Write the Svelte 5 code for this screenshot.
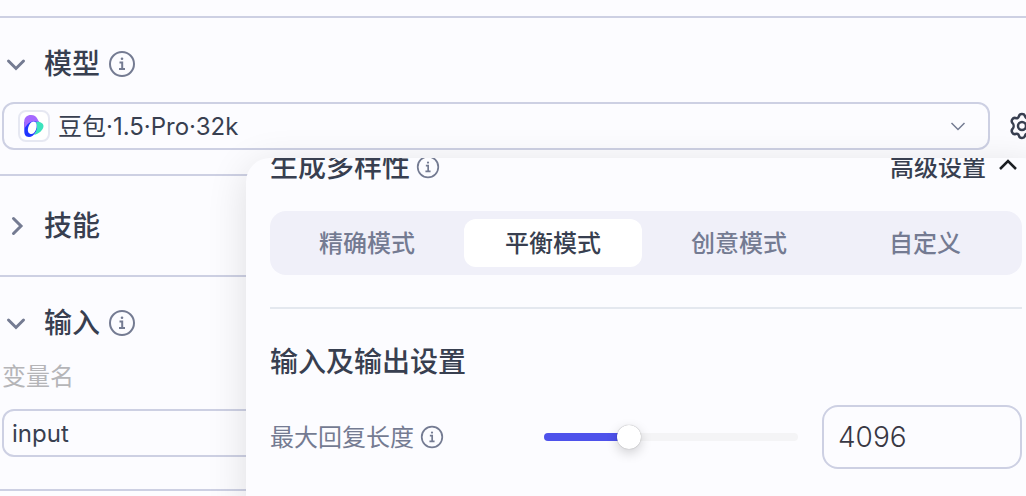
<script>
  let model = $state("豆包·1.5·Pro·32k");
  let variableName = $state("input");
  let mode = $state("平衡模式");
  let maxLength = $state(4096);

  const modes = ["精确模式", "平衡模式", "创意模式", "自定义"];
  const limit = 12288;

  let filled = $derived((maxLength / limit) * 100);
</script>

{#snippet info(size)}
  <svg class="info" width={size} height={size} viewBox="0 0 28 28" aria-hidden="true">
    <circle cx="14" cy="14" r="12" />
    <path d="M11.5 12.5h2.700v6.500M11 19h6" />
    <circle class="dot" cx="14" cy="8.800" r="1.300" />
  </svg>
{/snippet}

<main>
  <section>
    <button class="title">
      <svg class="arrow" width="32" height="32" viewBox="0 0 32 32" aria-hidden="true">
        <path d="M8.500 13l7.500 7.500 7.500-7.500" />
      </svg>
      <span>模型</span>
      {@render info(28)}
    </button>
    <div class="model-row">
      <div class="field model">
        <span class="logo">
          <svg width="20" height="24" viewBox="0 0 20 24" aria-hidden="true">
            <path fill="#1f35ff" d="M9 2l8 8-5 8c-2 3-4.500 5-7 5C1.500 23 .2 20 .3 17V8z" />
            <path fill="#a569ff" d="M.3 15V7.500C.3 3.500 3 1 7 1c3.500 0 5 1.500 6.500 4l2 4C11 6 5 6 .3 15z" />
            <path fill="#3be3bd" d="M12 8c3.500-.7 7.500 1 7.500 4 0 4-5 8-9.500 9 2.500-3 4-8.500 2-13z" />
            <path fill="#fff" d="M9.500 7.500c3 0 3.500 3 3 6-.6 3.500-2.500 6.500-5 6.500-3 0-4-2.500-3.500-5.500s2.500-7 5.500-7z" />
          </svg>
        </span>
        <select bind:value={model} aria-label="模型">
          <option>豆包·1.5·Pro·32k</option>
        </select>
        <svg class="caret" width="20" height="20" viewBox="0 0 20 20" aria-hidden="true">
          <path d="M3.500 7l6.500 6.500L16.500 7" />
        </svg>
      </div>
      <button class="gear" aria-label="设置">
        <svg width="28" height="28" viewBox="0 0 28 28" aria-hidden="true">
          <path d="M11 4.200C11.600 1.300 16.400 1.300 17 4.200c.5 1.800 2 2.400 3.500 1.800 2.600-.8 5 3 3 5-1.500 1.600-1.500 4.400 0 6 2 2-.4 5.800-3 5-1.500-.6-3 0-3.500 1.800-.6 2.900-5.400 2.900-6 0-.5-1.800-2-2.400-3.500-1.800-2.600.8-5-3-3-5 1.500-1.600 1.500-4.400 0-6-2-2 .4-5.800 3-5 1.500.6 3 0 3.500-1.800z" />
          <circle cx="14" cy="14" r="4" />
        </svg>
      </button>
    </div>
  </section>

  <section class="collapsed">
    <button class="title">
      <svg class="arrow" width="32" height="32" viewBox="0 0 32 32" aria-hidden="true">
        <path d="M13.500 8.500L21 16l-7.500 7.500" />
      </svg>
      <span>技能</span>
    </button>
  </section>

  <section class="inputs">
    <button class="title">
      <svg class="arrow" width="32" height="32" viewBox="0 0 32 32" aria-hidden="true">
        <path d="M8.500 13l7.500 7.500 7.500-7.500" />
      </svg>
      <span>输入</span>
      {@render info(28)}
    </button>
    <label for="variable">变量名</label>
    <input id="variable" class="field" type="text" bind:value={variableName} />
  </section>
  <section class="rest"></section>

  <div class="popup">
    <div class="popup-head">
      <h2><span>生成多样性</span> {@render info(24)}</h2>
      <button class="advanced">
        <span>高级设置</span>
        <svg width="28" height="28" viewBox="0 0 28 28" aria-hidden="true">
          <path d="M6 16l8-8 8 8" />
        </svg>
      </button>
    </div>

    <div class="tabs">
      {#each modes as name}
        <button class:active={mode === name} onclick={() => (mode = name)}>
          <span>{name}</span>
        </button>
      {/each}
    </div>

    <hr />

    <h2><span>输入及输出设置</span></h2>
    <div class="setting">
      <label for="length"><span>最大回复长度</span> {@render info(24)}</label>
      <div class="slider">
        <div class="track">
          <div class="fill" style="width: {filled}%"></div>
        </div>
        <input type="range" min="0" max={limit} bind:value={maxLength} aria-label="最大回复长度" />
      </div>
      <input id="length" class="number" type="number" bind:value={maxLength} />
    </div>
  </div>
</main>

<style>
  :global(body) {
    background: #fcfcff;
  }

  main {
    position: relative;
    box-sizing: border-box;
    min-height: 100vh;
    padding-top: 16px;
    overflow: hidden;
    color: #383f50;
    font-family: Inter, "Noto Sans CJK SC", sans-serif;
    font-size: 24px;
  }

  button,
  input,
  select {
    padding: 0;
    border: 0;
    background: none;
    color: inherit;
    font: inherit;
  }

  button {
    cursor: pointer;
  }

  svg {
    flex: none;
    fill: none;
    stroke: currentColor;
    stroke-width: 2;
  }

  section {
    border-top: 2px solid #cdd0e3;
    padding: 26px 0 24px;
  }

  .collapsed {
    padding: 30px 0 29px;
  }

  .inputs {
    padding-bottom: 32px;
  }

  .rest {
    padding: 0;
  }

  .title {
    display: flex;
    align-items: center;
    height: 40px;
    gap: 8px;
    font-size: 28px;
    font-weight: 500;
  }

  .title span,
  .popup span {
    padding-bottom: 4px;
  }

  .arrow {
    margin-right: 4px;
    color: #747b92;
    stroke-width: 3;
    stroke-linecap: round;
  }

  .info {
    color: #747b92;
  }

  .info .dot {
    fill: currentColor;
    stroke: none;
  }

  .field {
    box-sizing: border-box;
    height: 48px;
    border: 2px solid #cdd0e3;
    border-radius: 12px;
  }

  .model-row {
    display: flex;
    align-items: center;
    gap: 18px;
    margin: 18px -10px 0 2px;
  }

  .model {
    position: relative;
    display: flex;
    flex: 1;
    align-items: center;
    gap: 8px;
    padding-left: 14px;
  }

  .logo {
    display: flex;
    align-items: center;
    justify-content: center;
    box-sizing: border-box;
    width: 32px;
    height: 32px;
    border: 2px solid #e6e8f2;
    border-radius: 8px;
    background: #fff;
  }

  .logo svg {
    stroke: none;
  }

  select {
    flex: 1;
    height: 44px;
    appearance: none;
    outline: none;
  }

  .caret {
    position: absolute;
    right: 20px;
    color: #747b92;
    pointer-events: none;
    stroke-width: 1.5;
  }

  .gear {
    display: flex;
  }

  .gear svg {
    stroke-width: 2.5;
  }

  .inputs label {
    display: block;
    margin: 16px 0 14px 2px;
    color: #b5b5b8;
    line-height: 36px;
  }

  .inputs input {
    display: block;
    width: calc(100% - 38px);
    margin-left: 2px;
    padding: 0 8px;
  }

  .popup {
    position: absolute;
    top: 158px;
    right: -20px;
    bottom: -24px;
    left: 246px;
    padding: 0 24px;
    overflow: hidden;
    border-radius: 24px;
    background: #fcfcff;
    box-shadow: 0 8px 40px rgba(0, 0, 0, 0.12);
  }

  /* the panel is scrolled a little, so its first row is cut off */
  .popup-head {
    display: flex;
    justify-content: space-between;
    margin-top: -11px;
  }

  h2 {
    display: flex;
    align-items: center;
    gap: 6px;
    height: 40px;
    margin: 0;
    font-size: 28px;
    font-weight: 500;
  }

  .advanced {
    display: flex;
    align-items: center;
    gap: 8px;
    font-weight: 500;
  }

  .advanced svg {
    color: #1c1f23;
    stroke-width: 2.5;
  }

  .tabs {
    display: grid;
    grid-template-columns: repeat(4, 1fr);
    gap: 8px;
    margin-top: 24px;
    padding: 8px;
    border-radius: 16px;
    background: #f0f0f9;
  }

  .tabs button {
    display: flex;
    align-items: center;
    justify-content: center;
    height: 48px;
    border-radius: 12px;
    color: #747b92;
    font-weight: 500;
  }

  .tabs .active {
    background: #fff;
    color: #383f50;
  }

  hr {
    height: 2px;
    margin: 32px 0 33px;
    border: 0;
    background: #e4e8ef;
  }

  .setting {
    display: grid;
    grid-template-columns: 250px 1fr 200px;
    align-items: center;
    gap: 24px;
    margin-top: 23px;
  }

  .setting label {
    display: flex;
    align-items: center;
    gap: 6px;
    color: #747b92;
  }

  .slider {
    position: relative;
  }

  .track {
    height: 8px;
    border-radius: 4px;
    background: #f4f4f6;
  }

  .fill {
    height: 8px;
    border-radius: 4px;
    background: #4e52eb;
  }

  /* the handle's middle may reach both ends of the track */
  .slider input {
    position: absolute;
    top: -8px;
    left: -12px;
    width: calc(100% + 24px);
    height: 24px;
    margin: 0;
    appearance: none;
  }

  .slider input::-webkit-slider-thumb {
    width: 24px;
    height: 24px;
    border-radius: 50%;
    appearance: none;
    background: #fff;
    box-shadow: 0 4px 12px rgba(0, 0, 0, 0.18), 0 0 1px rgba(0, 0, 0, 0.4);
  }

  .number {
    box-sizing: border-box;
    width: 100%;
    height: 64px;
    padding: 0 14px;
    border: 2px solid #cdd0e3;
    border-radius: 16px;
    color: #383743;
    font-size: 28px;
    font-weight: 300;
    appearance: textfield;
  }

  .number::-webkit-inner-spin-button {
    display: none;
  }
</style>
